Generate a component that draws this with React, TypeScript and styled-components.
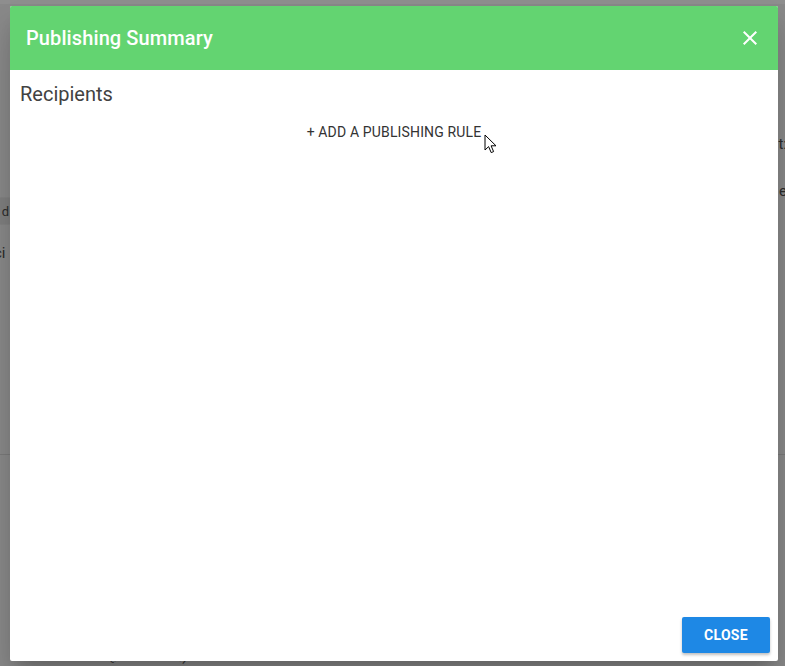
import React from "react";
import styled, { createGlobalStyle } from "styled-components";

const GlobalStyle = createGlobalStyle`
  html, body {
    margin: 0;
    padding: 0;
    width: 785px;
    height: 666px;
    overflow: hidden;
    font-family: Roboto, "Liberation Sans", Arial, sans-serif;
  }
`;

// the page sitting under the dimmed overlay
const Page = styled.div`
  position: relative;
  width: 785px;
  height: 666px;
  background: #898989;
  overflow: hidden;
  box-shadow: inset 0 4px 0 #8f8f8f;
`;

const BackRow = styled.div`
  display: flex;
  justify-content: space-between;
  height: 455px;
  border-bottom: 1px solid #7a7a7a;
  box-sizing: border-box;
`;

const BackCol = styled.div<{ $align: "left" | "right" }>`
  display: flex;
  flex-direction: column;
  align-items: ${(p) => (p.$align === "left" ? "flex-start" : "flex-end")};
  padding-top: ${(p) => (p.$align === "left" ? "197px" : "134px")};
  gap: ${(p) => (p.$align === "left" ? "18px" : "27px")};
`;

const BackChip = styled.div`
  height: 28px;
  width: 22px;
  margin-left: -10px;
  background: #7f7f7f;
  border: 1px solid #838383;
  color: #2c2c2c;
  font-size: 13px;
  line-height: 28px;
  text-align: right;
  padding-right: 2px;
  box-sizing: border-box;
`;

const BackText = styled.span<{ $shift: number }>`
  color: #2a2a2a;
  font-size: 15px;
  line-height: 20px;
  margin: 0 ${(p) => p.$shift}px;
`;

const BackBottom = styled.div`
  display: flex;
  gap: 60px;
  padding: 196px 0 0 108px;
  color: #333;
  font-size: 12px;
`;

const Slanted = styled.span`
  display: inline-block;
  transform: rotate(40deg);
`;

const Dialog = styled.div`
  position: absolute;
  top: 6px;
  left: 10px;
  width: 768px;
  height: 655px;
  display: flex;
  flex-direction: column;
  background: #fff;
  border-radius: 2px;
  box-shadow: 0 11px 15px -7px rgba(0, 0, 0, 0.2), 0 24px 38px 3px rgba(0, 0, 0, 0.14);
  overflow: hidden;
`;

const Header = styled.div`
  height: 64px;
  flex-shrink: 0;
  background: #63d471;
  display: flex;
  align-items: center;
  justify-content: space-between;
  padding: 0 16px;
`;

const Title = styled.h2`
  margin: 0;
  color: #fff;
  font-size: 20px;
  font-weight: 500;
  line-height: 24px;
  letter-spacing: 0.1px;
`;

const IconButton = styled.button`
  width: 24px;
  height: 24px;
  padding: 0;
  border: none;
  background: transparent;
  display: flex;
  align-items: center;
  justify-content: center;
  cursor: pointer;
`;

const Body = styled.div`
  flex: 1;
  padding: 12px 10px 0 10px;
  display: flex;
  flex-direction: column;
`;

const SectionTitle = styled.div`
  font-size: 20px;
  line-height: 24px;
  color: #424242;
`;

const AddRule = styled.button`
  align-self: center;
  position: relative;
  margin-top: 16px;
  border: none;
  background: transparent;
  font-family: Roboto, "Liberation Sans", Arial, sans-serif;
  font-size: 14px;
  line-height: 20px;
  letter-spacing: 0.15px;
  color: #333;
  padding: 0;
`;

// mouse pointer captured in the screenshot
const Pointer = styled.svg`
  position: absolute;
  left: calc(100% + 3px);
  top: 12px;
`;

const Footer = styled.div`
  display: flex;
  justify-content: flex-end;
  padding: 8px;
`;

const CloseButton = styled.button`
  width: 88px;
  height: 36px;
  border: none;
  border-radius: 2px;
  background: #1e88e5;
  color: #fff;
  font-family: Roboto, "Liberation Sans", Arial, sans-serif;
  font-size: 14px;
  font-weight: 700;
  letter-spacing: 0.3px;
  box-shadow: 0 2px 3px rgba(0, 0, 0, 0.25);
`;

export default function App() {
  return (
    <>
      <GlobalStyle />
      <Page>
        <BackRow>
          <BackCol $align="left">
            <BackChip>d</BackChip>
            <BackText $shift={-6}>ci</BackText>
          </BackCol>
          <BackCol $align="right">
            <BackText $shift={-2}>t:</BackText>
            <BackText $shift={-2}>e</BackText>
          </BackCol>
        </BackRow>
        <BackBottom>
          <Slanted>le</Slanted>
          <Slanted>th</Slanted>
        </BackBottom>

        <Dialog>
          <Header>
            <Title>Publishing Summary</Title>
            <IconButton aria-label="close">
              <svg width="24" height="24" viewBox="0 0 24 24" fill="#fff">
                <path d="M19 6.41L17.59 5 12 10.59 6.41 5 5 6.41 10.59 12 5 17.59 6.41 19 12 13.41 17.59 19 19 17.59 13.41 12z" />
              </svg>
            </IconButton>
          </Header>
          <Body>
            <SectionTitle>Recipients</SectionTitle>
            <AddRule>
              + ADD A PUBLISHING RULE
              <Pointer width="14" height="21" viewBox="0 0 14 21">
                <path
                  d="M1 1 L1 16 L4.6 12.6 L7.2 18.6 L9.6 17.6 L7.1 11.8 L12 11.8 Z"
                  fill="#fff"
                  stroke="#000"
                  strokeWidth="1"
                  strokeLinejoin="round"
                />
              </Pointer>
            </AddRule>
          </Body>
          <Footer>
            <CloseButton>CLOSE</CloseButton>
          </Footer>
        </Dialog>
      </Page>
    </>
  );
}
